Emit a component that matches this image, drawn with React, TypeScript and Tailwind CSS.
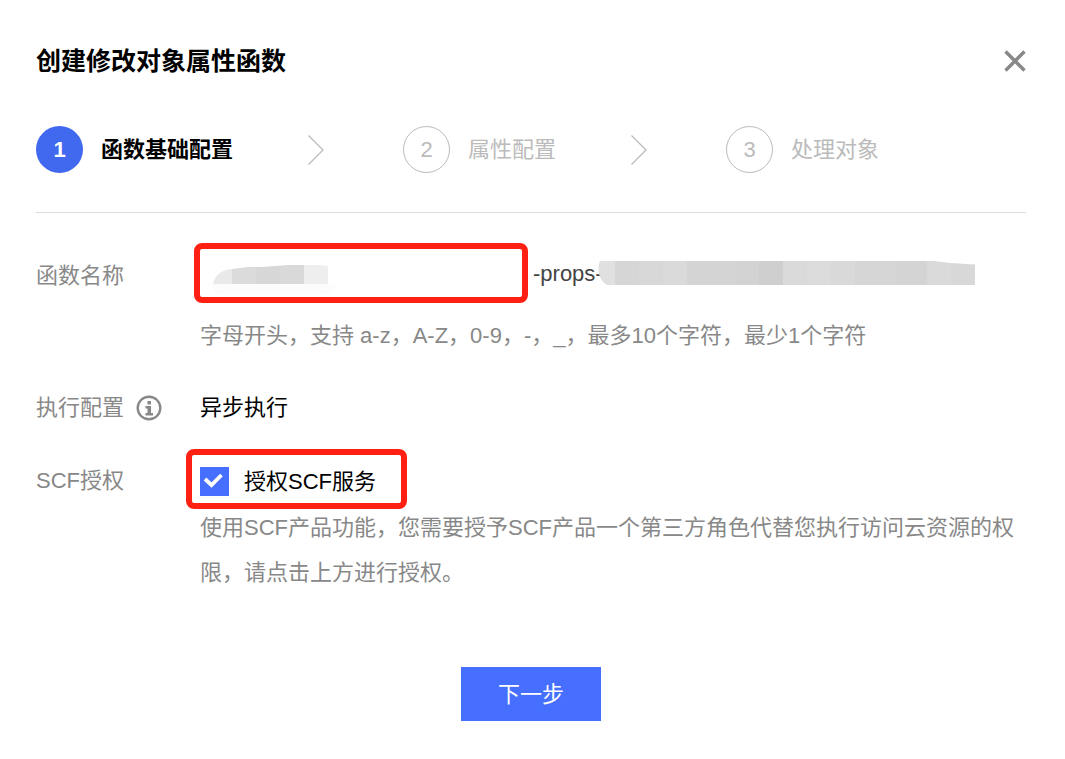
import { Fragment, useState } from 'react'

const steps = ['函数基础配置', '属性配置', '处理对象']

const prefixTiles = ['#e9e9e9', '#dbdbdb', '#d7d7d7', '#d9d9d9', '#eeeeee']
const suffixTiles = [
  '#e0e0e0', '#d6d6d6', '#d8d8d8', '#dadada', '#d4d4d4', '#d4d4d4', '#d3d3d3', '#cfcfcf',
  '#dadada', '#dcdcdc', '#d9d9d9', '#d5d5d5', '#d5d5d5', '#d4d4d4', '#dadada', '#d8d8d8', '#d0d0d0',
]

function Chevron() {
  return (
    <svg className="mr-[79px] ml-[75px] h-[30px] w-4 shrink-0" viewBox="0 0 16 30" fill="none" aria-hidden="true">
      <path d="M0.5 0.5 15 15 0.5 29.5" stroke="#bbb" strokeWidth="1.3" />
    </svg>
  )
}

function CloseIcon() {
  return (
    <svg className="size-[22px]" viewBox="0 0 22 22" fill="none" aria-hidden="true">
      <path d="M1.5 1.5 20.5 20.5M20.5 1.5 1.5 20.5" stroke="#888" strokeWidth="3.4" />
    </svg>
  )
}

function InfoIcon() {
  return (
    <svg className="size-[26px]" viewBox="0 0 26 26" fill="none" aria-hidden="true">
      <circle cx="13" cy="13" r="11.3" stroke="#888" strokeWidth="2.4" />
      <path d="M11.5 6h3.5v3.5h-3.5zM9.5 11H15v7h2v2.5H9.5V18h2v-4.5h-2z" fill="#888" />
    </svg>
  )
}

// Mosaic over the user's own prefix
function PrefixMask() {
  return (
    <svg className="pointer-events-none absolute top-[22px] left-[18px] h-[30px] w-[128px]" viewBox="0 0 128 30" aria-hidden="true">
      <clipPath id="prefix">
        <path d="M1 19C3 11 8 5 20 4L36 2 50 2 76 0H108L116 1V19Z" />
      </clipPath>
      <path d="M1 19H126C122 26 118 30 110 30H10C4 30 1 26 1 19Z" fill="#fcfcfc" />
      <g clipPath="url(#prefix)">
        {prefixTiles.map((c, i) => (
          <rect key={i} x={i * 24 - 4} width="24" height="19" fill={c} />
        ))}
      </g>
    </svg>
  )
}

// Mosaic over the generated suffix
function SuffixMask() {
  return (
    <svg className="-ml-[5px] h-6 w-[377px] shrink-0" viewBox="0 0 377 24" aria-hidden="true">
      <clipPath id="suffix">
        <path d="M2 0H336L352 2 377 3.5V24H9C2 20-2 10 2 0Z" />
      </clipPath>
      <g clipPath="url(#suffix)">
        {suffixTiles.map((c, i) => (
          <rect key={i} x={i * 24 - 7} width="24" height="24" fill={c} />
        ))}
      </g>
    </svg>
  )
}

export default function App() {
  const [agreed, setAgreed] = useState(true)

  return (
    <main className="bg-white pt-[41px] pr-[39px] pb-[38px] pl-9 font-['Liberation_Sans','Noto_Sans_CJK_SC',sans-serif] text-[22px] leading-8 text-[#888]">
      <header className="flex items-center justify-between">
        <h1 className="text-[25px] leading-10 font-bold text-black">创建修改对象属性函数</h1>
        <button type="button" aria-label="关闭">
          <CloseIcon />
        </button>
      </header>

      <ol className="mt-[45px] flex items-center border-b border-[#ddd] pb-[39px]">
        {steps.map((name, i) => (
          <Fragment key={name}>
            {i > 0 && <Chevron />}
            <li
              className={
                i === 0
                  ? 'flex items-center gap-[18px] font-bold whitespace-nowrap text-black'
                  : 'flex items-center gap-[18px] whitespace-nowrap text-[#bbb]'
              }
            >
              <span
                className={
                  i === 0
                    ? 'flex size-[47px] items-center justify-center rounded-full bg-[#4169f0] text-white'
                    : 'flex size-[47px] items-center justify-center rounded-full border border-[#bbb]'
                }
              >
                {i + 1}
              </span>
              {name}
            </li>
          </Fragment>
        ))}
      </ol>

      <form className="mt-[30px]" onSubmit={(e) => e.preventDefault()}>
        <div className="grid grid-cols-[164px_1fr]">
          <label htmlFor="fn-name" className="pt-[17px]">函数名称</label>
          <div>
            <div className="-ml-1.5 flex items-center">
              <div className="relative">
                <input
                  id="fn-name"
                  className="block h-[60px] w-[334px] rounded-lg border-6 border-[#ff2014] px-3 text-[#444] outline-none"
                />
                <PrefixMask />
              </div>
              <span className="ml-[5px] pt-0.5 text-[#444]">-props-</span>
              <SuffixMask />
            </div>
            <p className="mt-[17px]">字母开头，支持 a-z，A-Z，0-9，-，_，最多10个字符，最少1个字符</p>
          </div>
        </div>

        <div className="mt-10 grid grid-cols-[164px_1fr]">
          <div className="flex items-center gap-3">
            执行配置
            <InfoIcon />
          </div>
          <div className="text-black">异步执行</div>
        </div>

        <div className="mt-[25px] grid grid-cols-[164px_1fr]">
          <div className="pt-4">SCF授权</div>
          <div>
            <div className="-ml-[14px] flex h-[60px] w-[221px] items-center rounded-lg border-6 border-[#ff2014] pt-1 pl-2">
              <label className="flex items-center gap-[15px] whitespace-nowrap text-black">
                <span className="relative size-[29px] shrink-0">
                  <input
                    type="checkbox"
                    checked={agreed}
                    onChange={(e) => setAgreed(e.target.checked)}
                    className="block size-[29px] appearance-none border border-[#bbb] checked:border-[#466eff] checked:bg-[#466eff]"
                  />
                  {agreed && (
                    <svg className="pointer-events-none absolute inset-0" viewBox="0 0 29 29" fill="none" aria-hidden="true">
                      <path d="M5 12 11.5 18 21.5 8" stroke="#fff" strokeWidth="3.8" />
                    </svg>
                  )}
                </span>
                <span className="pt-0.5">授权SCF服务</span>
              </label>
            </div>
            <p className="-mt-1 leading-[45px]">
              使用SCF产品功能，您需要授予SCF产品一个第三方角色代替您执行访问云资源的权限，请点击上方进行授权。
            </p>
          </div>
        </div>

        <button type="submit" className="mx-auto mt-[72px] block h-[54px] w-[140px] bg-[#466eff] pt-0.5 text-white">
          下一步
        </button>
      </form>
    </main>
  )
}
